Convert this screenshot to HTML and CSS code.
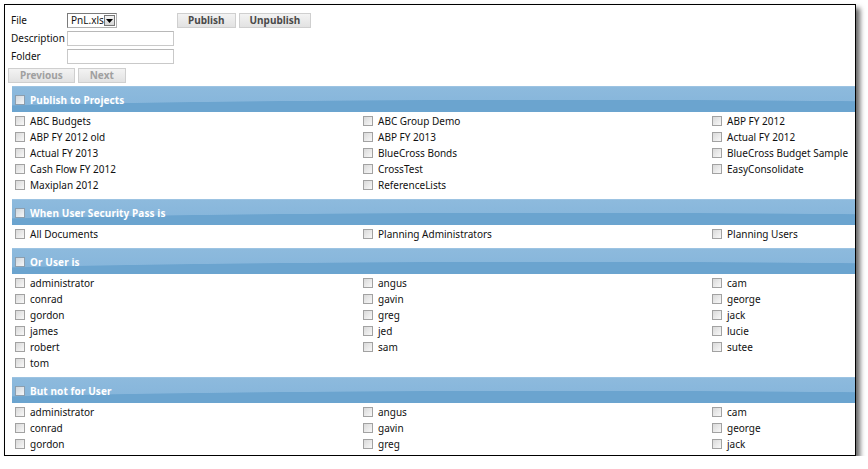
FILE: index.html
```html
<!DOCTYPE html>
<html>
<head>
<meta charset="utf-8">
<link rel="stylesheet" href="styles.css">
</head>
<body>
<div class="frame">
  <div class="form">
    <div class="frow">
      <label class="lbl">File</label>
      <div class="select"><span class="sel-text">PnL.xls</span><span class="sel-btn"><svg width="7" height="4" viewBox="0 0 7 4"><path d="M0 0H7L3.5 4Z" fill="#000"/></svg></span></div>
      <div class="actions"><button class="btn">Publish</button><button class="btn">Unpublish</button></div>
    </div>
    <div class="frow"><label class="lbl">Description</label><input class="txt" type="text"></div>
    <div class="frow"><label class="lbl">Folder</label><input class="txt" type="text"></div>
    <div class="frow nav"><button class="btn dis">Previous</button><button class="btn dis">Next</button></div>
  </div>

  <section class="group">
    <div class="band"><input type="checkbox" class="cb hcb">Publish to Projects</div>
    <ul class="grid">
      <li><input type="checkbox" class="cb">ABC Budgets</li>
      <li><input type="checkbox" class="cb">ABC Group Demo</li>
      <li><input type="checkbox" class="cb">ABP FY 2012</li>
      <li><input type="checkbox" class="cb">ABP FY 2012 old</li>
      <li><input type="checkbox" class="cb">ABP FY 2013</li>
      <li><input type="checkbox" class="cb">Actual FY 2012</li>
      <li><input type="checkbox" class="cb">Actual FY 2013</li>
      <li><input type="checkbox" class="cb">BlueCross Bonds</li>
      <li><input type="checkbox" class="cb">BlueCross Budget Sample</li>
      <li><input type="checkbox" class="cb">Cash Flow FY 2012</li>
      <li><input type="checkbox" class="cb">CrossTest</li>
      <li><input type="checkbox" class="cb">EasyConsolidate</li>
      <li><input type="checkbox" class="cb">Maxiplan 2012</li>
      <li><input type="checkbox" class="cb">ReferenceLists</li>
    </ul>
  </section>

  <section class="group">
    <div class="band"><input type="checkbox" class="cb hcb">When User Security Pass is</div>
    <ul class="grid">
      <li><input type="checkbox" class="cb">All Documents</li>
      <li><input type="checkbox" class="cb">Planning Administrators</li>
      <li><input type="checkbox" class="cb">Planning Users</li>
    </ul>
  </section>

  <section class="group">
    <div class="band"><input type="checkbox" class="cb hcb">Or User is</div>
    <ul class="grid">
      <li><input type="checkbox" class="cb">administrator</li>
      <li><input type="checkbox" class="cb">angus</li>
      <li><input type="checkbox" class="cb">cam</li>
      <li><input type="checkbox" class="cb">conrad</li>
      <li><input type="checkbox" class="cb">gavin</li>
      <li><input type="checkbox" class="cb">george</li>
      <li><input type="checkbox" class="cb">gordon</li>
      <li><input type="checkbox" class="cb">greg</li>
      <li><input type="checkbox" class="cb">jack</li>
      <li><input type="checkbox" class="cb">james</li>
      <li><input type="checkbox" class="cb">jed</li>
      <li><input type="checkbox" class="cb">lucie</li>
      <li><input type="checkbox" class="cb">robert</li>
      <li><input type="checkbox" class="cb">sam</li>
      <li><input type="checkbox" class="cb">sutee</li>
      <li><input type="checkbox" class="cb">tom</li>
    </ul>
  </section>

  <section class="group">
    <div class="band"><input type="checkbox" class="cb hcb">But not for User</div>
    <ul class="grid">
      <li><input type="checkbox" class="cb">administrator</li>
      <li><input type="checkbox" class="cb">angus</li>
      <li><input type="checkbox" class="cb">cam</li>
      <li><input type="checkbox" class="cb">conrad</li>
      <li><input type="checkbox" class="cb">gavin</li>
      <li><input type="checkbox" class="cb">george</li>
      <li><input type="checkbox" class="cb">gordon</li>
      <li><input type="checkbox" class="cb">greg</li>
      <li><input type="checkbox" class="cb">jack</li>
    </ul>
  </section>
</div>
</body>
</html>
```

FILE: styles.css
```css
html, body {
  margin: 0;
  padding: 0;
  background: #fff;
}
body {
  font-family: "Noto Sans", "DejaVu Sans", sans-serif;
  font-size: 10px;
  color: #111;
}
.frame {
  box-sizing: border-box;
  width: 852px;
  height: 452px;
  margin: 4px 0 0 4px;
  border: 1px solid #000;
  background: #fff;
  overflow: hidden;
  box-shadow: 4px 4px 5px rgba(0, 0, 0, 0.6);
}
.form {
  padding: 8px 0 0 3px;
  display: flex;
  flex-direction: column;
  gap: 3px;
}
.frow {
  display: flex;
  align-items: center;
  height: 15px;
}
.frow.nav {
  margin-top: 1px;
  gap: 3px;
}
.lbl {
  box-sizing: border-box;
  width: 59px;
  padding-left: 3px;
  line-height: 15px;
}
.select {
  box-sizing: border-box;
  width: 50px;
  height: 15px;
  border: 1px solid #7a7a7a;
  border-right-color: #b0b0b0;
  border-bottom-color: #b0b0b0;
  display: flex;
  align-items: center;
  justify-content: space-between;
  padding: 0 1px 0 3px;
  background: #fff;
}
.sel-text {
  line-height: 13px;
}
.sel-btn {
  box-sizing: border-box;
  width: 12px;
  height: 11px;
  border: 1px solid #777;
  background: linear-gradient(#f4f4f4, #d6d6d6);
  display: flex;
  align-items: center;
  justify-content: center;
}
.actions {
  display: flex;
  gap: 3px;
  margin-left: 60px;
}
.btn {
  box-sizing: border-box;
  height: 15px;
  padding: 0 10px;
  border: 1px solid #cfcfcf;
  background: linear-gradient(#f3f3f3, #e2e2e2);
  font-family: "Noto Sans", "DejaVu Sans", sans-serif;
  font-size: 10px;
  font-weight: bold;
  line-height: 13px;
  color: #4a4a4a;
  margin: 0;
}
.btn.dis {
  color: #a0a0a0;
  padding: 0 11px;
}
.txt {
  box-sizing: border-box;
  width: 107px;
  height: 15px;
  margin: 0;
  padding: 0;
  border: 1px solid #c9c9c9;
  border-top-color: #b8b8b8;
  background: #fff;
}
.group {
  margin-left: 7px;
}
.form + .group {
  margin-top: 3px;
}
.band {
  box-sizing: border-box;
  height: 26px;
  display: flex;
  align-items: center;
  padding-left: 3px;
  border-top: 1px solid #9cc3e2;
  color: #fff;
  font-weight: bold;
  letter-spacing: 0.1px;
  background:
    radial-gradient(ellipse 90% 70% at 65% 120%, #6ba4cf 96%, rgba(107, 164, 207, 0) 100%),
    linear-gradient(#8dbadd, #84b4da);
}
.grid {
  list-style: none;
  margin: 0;
  padding: 1px 0 6px 0;
  display: grid;
  grid-template-columns: 348px 349px 1fr;
}
.grid li {
  display: flex;
  align-items: center;
  height: 16px;
  padding-left: 3px;
  white-space: nowrap;
}
.cb {
  -webkit-appearance: none;
  appearance: none;
  box-sizing: border-box;
  width: 10px;
  height: 10px;
  margin: 0 5px 0 0;
  border: 1px solid #a2a2a2;
  background: linear-gradient(135deg, #d9d9d9, #f8f8f8);
  flex: none;
}
.hcb {
  border-color: #8c9eae;
  background: linear-gradient(135deg, #cfd6dc, #f4f6f8);
}
```
